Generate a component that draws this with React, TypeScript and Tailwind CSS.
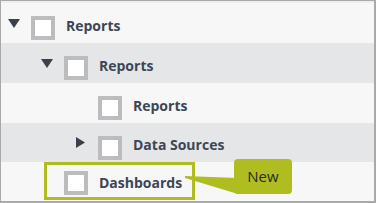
import React from "react";

const font = { fontFamily: '"Open Sans", "Noto Sans", sans-serif' };

function Check({ className = "" }: { className?: string }) {
  return (
    <div
      className={`w-[24px] h-[24px] shrink-0 border-[4px] border-[#bcbcbe] bg-white ${className}`}
    />
  );
}

function Down() {
  return (
    <svg width="12" height="9" viewBox="0 0 12 9" className="shrink-0">
      <polygon points="0,0 12,0 6,9" fill="#3a414c" />
    </svg>
  );
}

function Right() {
  return (
    <svg width="12" height="11" viewBox="0 0 12 11" className="shrink-0">
      <polygon points="1,0 10,5.5 1,11" fill="#3a414c" />
    </svg>
  );
}

function Label({ children, className = "" }: { children: React.ReactNode; className?: string }) {
  return (
    <span
      className={`text-[14px] font-bold text-[#3c4654] leading-none ml-[11px] ${className}`}
      style={font}
    >
      {children}
    </span>
  );
}

export default function App() {
  return (
    <div
      className="relative w-[376px] h-[203px] border-l border-t border-r-2 border-b-2 border-[#a9a9a9] bg-[#f7f7f7] overflow-hidden"
      style={font}
    >
      <div className="h-[2px] bg-[#eeeeee]" />
      <div className="flex items-center h-[40px] bg-[#f7f7f7] pl-[7px]">
        <Down />
        <Check className="ml-[11px] mt-[10px]" />
        <Label className="mt-[5px]">Reports</Label>
      </div>
      <div className="flex items-center h-[40px] bg-[#e5e6e8] pl-[40px]">
        <Down />
        <Check className="ml-[11px] mt-[10px]" />
        <Label className="mt-[5px]">Reports</Label>
      </div>
      <div className="flex items-center h-[40px] bg-[#f7f7f7] pl-[97px]">
        <Check className="mt-[10px]" />
        <Label className="mt-[5px]">Reports</Label>
      </div>
      <div className="flex items-center h-[39px] bg-[#e5e6e8] pl-[74px]">
        <Right />
        <Check className="ml-[11px] mt-[10px]" />
        <Label className="mt-[5px]">Data Sources</Label>
      </div>
      <div className="h-[39px] bg-[#f7f7f7] pl-[43px]">
        <div className="flex items-center w-[151px] h-[38px] border-[3px] border-[#afbd21] pl-[17px] pt-[3px]">
          <Check />
          <Label>Dashboards</Label>
        </div>
      </div>
      <svg
        width="54"
        height="20"
        viewBox="0 0 54 20"
        className="absolute left-[184px] top-[174px]"
      >
        <polygon points="0,1 53,3 53,19 0,3" fill="#afbd21" />
      </svg>
      <div className="absolute left-[233px] top-[158px] w-[58px] h-[35px] rounded-[4px] bg-[#afbd21] flex items-center justify-center">
        <span className="text-[15px] text-[#2a2a2a] leading-none" style={font}>
          New
        </span>
      </div>
    </div>
  );
}
